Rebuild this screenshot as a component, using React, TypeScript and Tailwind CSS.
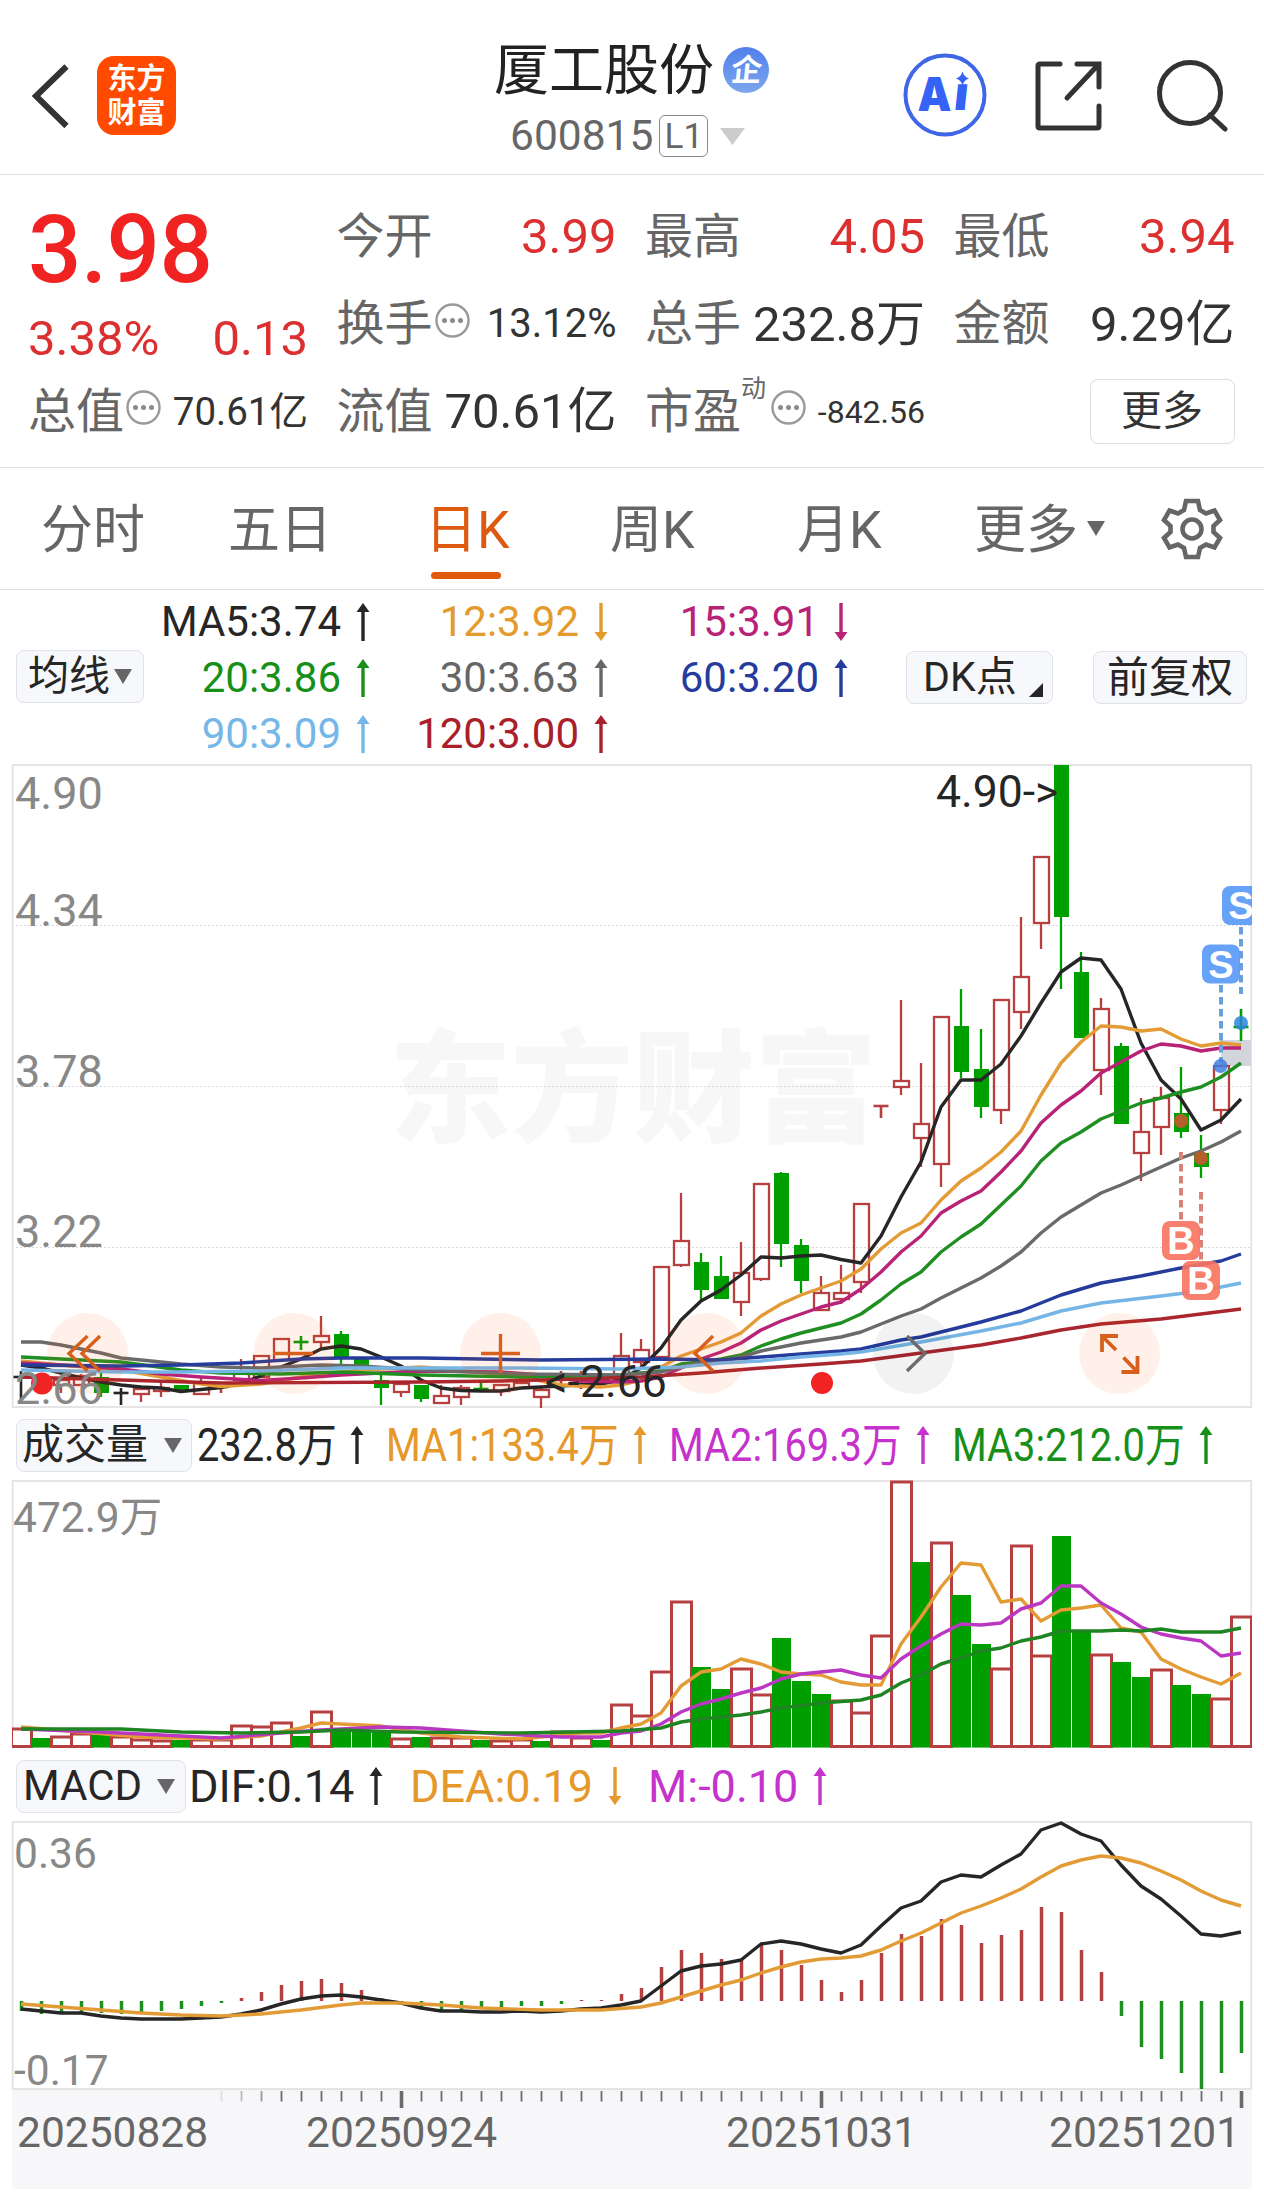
import { ReactNode } from "react";

const RED = "#b5403f";
const GREEN = "#009f00";

// every candle is 20px apart, first one centered on x = 21
const cx = (i: number) => 21 + i * 20;

type Kind = "r" | "g" | "k";
type Candle = [Kind, number, number, number, number];

// kind, high, body top, body bottom, low
const candles: Candle[] = [
  ["k", 1371, 1377, 1377, 1401],
  ["r", 1376, 1380, 1386, 1390],
  ["r", 1378, 1380, 1385, 1393],
  ["r", 1374, 1376, 1385, 1385],
  ["g", 1371, 1377, 1393, 1397],
  ["k", 1388, 1393, 1393, 1405],
  ["r", 1387, 1389, 1394, 1402],
  ["r", 1382, 1388, 1391, 1397],
  ["g", 1385, 1385, 1391, 1391],
  ["r", 1378, 1383, 1394, 1394],
  ["r", 1385, 1387, 1387, 1393],
  ["r", 1359, 1373, 1380, 1380],
  ["r", 1356, 1356, 1377, 1377],
  ["r", 1339, 1339, 1360, 1360],
  ["g", 1336, 1342, 1342, 1350],
  ["r", 1316, 1336, 1342, 1348],
  ["g", 1331, 1334, 1357, 1365],
  ["g", 1358, 1358, 1367, 1368],
  ["g", 1373, 1380, 1388, 1405],
  ["r", 1383, 1384, 1392, 1397],
  ["g", 1385, 1385, 1399, 1402],
  ["r", 1385, 1396, 1403, 1403],
  ["r", 1385, 1388, 1397, 1405],
  ["g", 1383, 1389, 1390, 1391],
  ["r", 1384, 1385, 1391, 1396],
  ["r", 1383, 1383, 1388, 1388],
  ["r", 1388, 1390, 1397, 1408],
  ["r", 1371, 1385, 1385, 1387],
  ["r", 1371, 1386, 1386, 1389],
  ["g", 1373, 1376, 1384, 1385],
  ["r", 1333, 1356, 1380, 1380],
  ["r", 1339, 1350, 1362, 1367],
  ["r", 1267, 1267, 1357, 1357],
  ["r", 1193, 1241, 1265, 1267],
  ["g", 1253, 1262, 1290, 1300],
  ["g", 1256, 1276, 1299, 1299],
  ["r", 1242, 1273, 1302, 1316],
  ["r", 1184, 1184, 1279, 1281],
  ["g", 1172, 1173, 1244, 1267],
  ["g", 1239, 1245, 1281, 1293],
  ["r", 1276, 1293, 1310, 1310],
  ["r", 1265, 1293, 1299, 1304],
  ["r", 1204, 1204, 1282, 1293],
  ["r", 1106, 1106, 1106, 1118],
  ["r", 1000, 1081, 1087, 1095],
  ["r", 1063, 1124, 1138, 1167],
  ["r", 1017, 1017, 1164, 1187],
  ["g", 989, 1026, 1072, 1078],
  ["g", 1029, 1069, 1107, 1118],
  ["r", 1000, 1000, 1110, 1124],
  ["r", 917, 977, 1012, 1029],
  ["r", 857, 857, 923, 949],
  ["g", 765, 765, 917, 989],
  ["g", 952, 972, 1038, 1038],
  ["r", 998, 1009, 1070, 1095],
  ["g", 1043, 1046, 1124, 1124],
  ["r", 1098, 1132, 1153, 1181],
  ["r", 1087, 1098, 1127, 1155],
  ["g", 1067, 1113, 1132, 1138],
  ["g", 1135, 1153, 1167, 1178],
  ["r", 1066, 1066, 1110, 1124],
  ["g", 1009, 1027, 1028, 1041],
];

// [index, y] pairs
type Pts = [number, number][];

// run of values for consecutive candles
const run = (start: number, ys: number[]): Pts => ys.map((y, k) => [start + k, y]);

const ma5 = run(0, [
  1365, 1368, 1373, 1378, 1382, 1385, 1387, 1388, 1391.5, 1389.5, 1387.5, 1383, 1376, 1367, 1359, 1349, 1346, 1349, 1357,
  1366, 1380, 1388, 1390.5, 1391, 1391, 1388, 1387, 1386, 1384.7, 1384, 1380, 1368, 1348, 1320, 1301, 1290, 1275, 1257,
  1258, 1256, 1255, 1259.5, 1263, 1236, 1197, 1162, 1107, 1080, 1080, 1064, 1036, 1003, 972, 958, 960, 989, 1043, 1080,
  1099, 1130, 1120, 1099,
]);
const ma12: Pts = [
  [0, 1361], [2, 1365], [5, 1370], [7, 1377], [9, 1384], [10, 1386.5], [12, 1384], [14, 1377], [17, 1370], [20, 1367], [22, 1370], [25, 1377],
  ...run(27, [
    1385, 1386, 1387, 1385, 1380, 1367, 1356, 1349, 1342, 1333, 1316, 1304, 1295, 1288, 1281, 1269, 1249, 1233, 1223,
    1200, 1181, 1168, 1152, 1131, 1095, 1063, 1042, 1026, 1027, 1031, 1029, 1039, 1046, 1043, 1045,
  ]),
];
const ma15: Pts = [
  [0, 1363], [3, 1366], [5, 1369], [7, 1374], [9, 1377], [12, 1380.5], [14, 1378], [16, 1375], [20, 1371], [24, 1372], [26, 1375], [28, 1381], [30, 1382],
  ...run(31, [
    1381, 1377, 1368, 1359, 1352, 1343, 1330, 1321, 1314, 1307, 1302, 1289, 1272, 1252, 1236, 1213, 1201, 1191, 1172,
    1151, 1123, 1105, 1091, 1073, 1062, 1051, 1044, 1046, 1051, 1048, 1048,
  ]),
];
const ma20: Pts = [
  [0, 1357], [2, 1359], [5, 1362], [8, 1370], [10, 1373], [13, 1374], [16, 1372], [20, 1375], [25, 1377], [28, 1376], [30, 1375],
  ...run(32, [
    1371, 1364, 1362, 1359, 1355, 1346, 1339, 1333, 1328, 1323, 1314, 1300, 1284, 1272, 1252, 1237, 1224, 1205, 1186,
    1161, 1143, 1132, 1119, 1111, 1103, 1098, 1092, 1087, 1077, 1063,
  ]),
];
const ma30: Pts = [
  [0, 1342], [1, 1342], [2, 1345], [3, 1349], [4, 1353], [5, 1358], [6, 1360], [8, 1364], [10, 1367], [12, 1368], [15, 1365], [17, 1366], [20, 1370], [25, 1374], [30, 1375],
  ...run(32, [
    1372, 1367, 1363, 1361, 1357, 1351, 1347, 1343, 1340, 1337, 1332, 1324, 1316, 1309, 1298, 1288, 1278, 1266, 1252,
    1233, 1217, 1205, 1193, 1185, 1176, 1167, 1158, 1151, 1142, 1131,
  ]),
];
const ma60: Pts = [
  [0, 1365], [5, 1366], [8, 1365], [11, 1363], [14, 1359], [16, 1358], [20, 1358], [26, 1360], [32, 1359], [35, 1360], [37, 1357], [39, 1354], [41, 1351], [42, 1349],
  [44, 1340], [45, 1337], [46, 1332], [48, 1322], [50, 1311], [52, 1295], [54, 1283], [56, 1276], [58, 1268], [60, 1261], [61, 1254],
];
const ma90: Pts = [
  [0, 1370], [5, 1372], [8, 1372], [12, 1371], [16, 1368], [25, 1368], [30, 1369], [33, 1367], [35, 1363], [37, 1361], [39, 1357], [41, 1354], [42, 1352],
  [45, 1342], [48, 1331], [50, 1323], [52, 1311], [54, 1303], [57, 1296], [59, 1291], [61, 1283],
];
const ma120: Pts = [
  [0, 1377], [5, 1380], [10, 1383], [20, 1382], [24, 1381], [28, 1379], [31, 1377], [34, 1373], [37, 1368], [40, 1364], [42, 1361],
  [45, 1353], [48, 1345], [50, 1338], [52, 1330], [54, 1324], [57, 1319], [59, 1314], [61, 1309],
];

const volumes: [Kind, number][] = [
  ["r", 1729], ["g", 1738], ["r", 1737], ["r", 1734], ["g", 1735], ["r", 1737], ["r", 1740], ["r", 1741], ["g", 1740], ["r", 1740],
  ["r", 1740], ["r", 1726], ["r", 1727], ["r", 1723], ["g", 1736], ["r", 1712], ["g", 1728], ["g", 1731], ["g", 1731], ["r", 1739],
  ["g", 1737], ["r", 1738], ["r", 1738], ["g", 1740], ["r", 1741], ["r", 1740], ["g", 1741], ["r", 1732], ["r", 1738], ["g", 1740],
  ["r", 1705], ["r", 1716], ["r", 1672], ["r", 1602], ["g", 1667], ["g", 1689], ["r", 1669], ["r", 1695], ["g", 1638], ["g", 1681],
  ["g", 1694], ["r", 1701], ["r", 1713], ["r", 1636], ["r", 1482], ["g", 1562], ["r", 1543], ["g", 1595], ["g", 1644], ["r", 1669],
  ["r", 1546], ["r", 1656], ["g", 1536], ["g", 1631], ["r", 1655], ["g", 1662], ["g", 1677], ["r", 1670], ["g", 1685], ["g", 1694],
  ["r", 1699], ["r", 1617],
];
const vma1: Pts = [
  [0, 1727], [3, 1732], [6, 1737], [10, 1739], [12, 1736], [14, 1728], [15, 1723], [16, 1724], [18, 1726], [20, 1733], [22, 1737], [25, 1739], [28, 1733], [29, 1733],
  ...run(30, [
    1728, 1724, 1713, 1686, 1672, 1669, 1659, 1664, 1672, 1674, 1675, 1682, 1685, 1685, 1644, 1617, 1587, 1563, 1565,
    1602, 1599, 1621, 1610, 1608, 1605, 1628, 1632, 1659, 1669, 1677, 1684, 1673,
  ]),
];
const vma2: Pts = [
  [0, 1729], [4, 1732], [8, 1736], [10, 1738], [13, 1733], [15, 1730], [18, 1727], [20, 1728], [22, 1731], [24, 1734], [27, 1737], [29, 1737],
  ...run(30, [
    1733, 1731, 1724, 1712, 1704, 1699, 1693, 1688, 1679, 1674, 1672, 1670, 1675, 1678, 1659, 1646, 1634, 1624, 1625,
    1623, 1609, 1603, 1586, 1586, 1603, 1614, 1627, 1634, 1638, 1641, 1656, 1653,
  ]),
];
const vma3: Pts = [
  [0, 1729], [5, 1729], [8, 1732], [11, 1733], [14, 1732], [16, 1730], [19, 1732], [25, 1733], [30, 1731], [32, 1728], [33, 1722], [34, 1719], [36, 1715], [37, 1712], [38, 1708], [40, 1703],
  ...run(42, [
    1700, 1695, 1683, 1675, 1664, 1658, 1651, 1648, 1641, 1637, 1631, 1631, 1631, 1630, 1631, 1629, 1632, 1632, 1632, 1628,
  ]),
];

const macd = [
  2011, 2014, 2013, 2012, 2013, 2014, 2012, 2011, 2009, 2006, 2003, 1998, 1992, 1985, 1981, 1979, 1983, 1990, 1998, 2002,
  2009, 2011, 2010, 2009, 2008, 2006, 2006, 2004, 2000, 2000, 1994, 1988, 1967, 1950, 1953, 1959, 1960, 1944, 1950, 1965,
  1980, 1992, 1980, 1953, 1934, 1936, 1919, 1925, 1943, 1935, 1930, 1907, 1912, 1950, 1972, 2016, 2047, 2059, 2073, 2089,
  2073, 2053,
];
const dif = run(0, [
  2009, 2011, 2013, 2013, 2016, 2018, 2019, 2019, 2019, 2018, 2017, 2014, 2010, 2004, 1999, 1996, 1995, 1997, 2000, 2003,
  2008, 2011, 2011, 2012, 2012, 2011, 2012, 2011, 2009, 2008, 2005, 2001, 1986, 1971, 1966, 1964, 1960, 1944, 1941, 1944,
  1949, 1953, 1945, 1926, 1908, 1901, 1882, 1875, 1877, 1865, 1854, 1830, 1823, 1834, 1841, 1865, 1886, 1899, 1916, 1934,
  1936, 1932,
]);
const dea: Pts = [
  [0, 2004], [2, 2007], [4, 2010], [6, 2013], [8, 2015], [10, 2016], [12, 2014], [14, 2010], [16, 2005], [17, 2003], [19, 2003], [21, 2005], [23, 2008], [26, 2010], [29, 2010],
  ...run(31, [
    2007, 2003, 1997, 1991, 1985, 1980, 1973, 1967, 1962, 1959, 1958, 1956, 1950, 1941, 1933, 1923, 1913, 1906, 1898,
    1889, 1877, 1866, 1860, 1856, 1858, 1863, 1871, 1880, 1891, 1900, 1906,
  ]),
];

function Line({ pts, color }: { pts: Pts; color: string }) {
  return (
    <polyline
      points={pts.map(([i, y]) => `${cx(i)},${y}`).join(" ")}
      fill="none"
      stroke={color}
      strokeWidth={3.4}
      strokeLinejoin="round"
    />
  );
}

function CandleBar({ i, c }: { i: number; c: Candle }) {
  const [kind, high, top, bottom, low] = c;
  const x = cx(i);
  const color = kind === "r" ? RED : kind === "g" ? GREEN : "#262626";
  if (bottom - top < 2) {
    return (
      <g stroke={color} strokeWidth={2.6}>
        <line x1={x} x2={x} y1={high} y2={low} />
        <line x1={x - 7.5} x2={x + 7.5} y1={top} y2={top} />
      </g>
    );
  }
  return (
    <g stroke={color} strokeWidth={2.3}>
      <line x1={x} x2={x} y1={high} y2={top} />
      <line x1={x} x2={x} y1={bottom} y2={low} />
      {kind === "r" ? (
        <rect x={x - 7} y={top} width={15} height={bottom - top} fill="none" />
      ) : (
        <rect x={x - 7} y={top} width={15} height={bottom - top} fill={color} stroke="none" />
      )}
    </g>
  );
}

function Tag({ x, y, letter, color }: { x: number; y: number; letter: string; color: string }) {
  return (
    <g>
      <rect x={x} y={y} width={38} height={39} rx={8} fill={color} fillOpacity={0.92} />
      <text
        x={x + 19}
        y={y + 33}
        textAnchor="middle"
        fill="#fff"
        className="font-['Liberation_Sans'] text-[38px] font-bold"
      >
        {letter}
      </text>
    </g>
  );
}

function PriceChart() {
  return (
    <svg className="block overflow-visible" width="1264" height="646" viewBox="0 764 1264 646">
      <defs>
        <clipPath id="price">
          <rect x="12" y="764" width="1240" height="646" />
        </clipPath>
      </defs>
      <text x="389" y="1132" fill="#f7f7f7" textLength="488" className="text-[122px] font-black">
        东方财富
      </text>
      {[925.5, 1086.5, 1247.5].map((y) => (
        <line key={y} x1="12" x2="1251" y1={y} y2={y} stroke="#d8d8d8" strokeWidth="1" strokeDasharray="2 2" />
      ))}
      <rect x="12.7" y="765" width="1238.5" height="642" fill="none" stroke="#e3e3e3" strokeWidth="1.8" />
      <rect x="1221" y="1040" width="30" height="26" fill="#d3d5dc" />
      {candles.map((c, i) => (
        <CandleBar key={i} i={i} c={c} />
      ))}
      <Line pts={ma5} color="#262626" />
      <Line pts={ma12} color="#e39b35" />
      <Line pts={ma15} color="#b82277" />
      <Line pts={ma20} color="#1f8f22" />
      <Line pts={ma30} color="#6a6a6a" />
      <Line pts={ma60} color="#253c9c" />
      <Line pts={ma90} color="#76b6e6" />
      <Line pts={ma120} color="#a9262e" />

      {/* quick action buttons */}
      {[87.5, 294, 500.5, 706.5, 1119.5].map((x) => (
        <circle key={x} cx={x} cy="1353.5" r="40.5" fill="#ff5a10" fillOpacity="0.09" />
      ))}
      <circle cx="913.5" cy="1353.5" r="40.5" fill="#000" fillOpacity="0.05" />
      <g fill="none" stroke="#d85f1c" strokeWidth="3.4">
        <path d="M87.5 1336 L69 1353.5 L87.5 1371" />
        <path d="M100 1336 L82 1353.5 L100 1371" />
        <path d="M273 1353.5 H313" />
        <path d="M481 1353.5 H520 M500.5 1334 V1373" />
        <path d="M713 1336 L695 1353.5 L713 1371" />
        <path d="M1118 1336 H1102 V1352 M1102.5 1336.5 L1116 1350" strokeWidth="3.8" />
        <path d="M1121.5 1372 H1137.5 V1356 M1137 1371.5 L1123.5 1357.5" strokeWidth="3.8" />
      </g>
      <path d="M907 1336 L925 1353.5 L907 1371" fill="none" stroke="#6b6b6b" strokeWidth="3.4" />
      <circle cx="42" cy="1383.5" r="11" fill="#f22323" />
      <circle cx="822" cy="1383" r="11" fill="#f22323" />

      {/* buy / sell marks */}
      <g clipPath="url(#price)">
        <g strokeWidth="4" strokeDasharray="7.5 4.5">
          <line x1="1241" x2="1241" y1="927" y2="994" stroke="#6a9fdc" />
          <line x1="1221" x2="1221" y1="985" y2="1062" stroke="#6a9fdc" />
          <line x1="1181" x2="1181" y1="1152" y2="1220" stroke="#d98277" />
          <line x1="1201" x2="1201" y1="1192" y2="1260" stroke="#d98277" />
        </g>
        <Tag x={1222} y={886} letter="S" color="#5a9af8" />
        <Tag x={1202} y={944.5} letter="S" color="#5a9af8" />
        <Tag x={1162} y={1221} letter="B" color="#f87463" />
        <Tag x={1182} y={1261} letter="B" color="#f87463" />
        <circle cx="1220.5" cy="1066" r="7" fill="#3d7fe0" fillOpacity="0.85" />
        <circle cx="1241" cy="1023" r="7" fill="#2a86dc" fillOpacity="0.85" />
        <circle cx="1181" cy="1121" r="7" fill="#b5602a" />
        <circle cx="1201" cy="1158" r="7" fill="#b5602a" />
      </g>

      <g fill="#888" className="text-[45px]">
        <text x="15" y="808.5">4.90</text>
        <text x="15" y="926">4.34</text>
        <text x="15" y="1087">3.78</text>
        <text x="15" y="1247">3.22</text>
        <text x="15" y="1404">2.66</text>
      </g>
      <g fill="#262626" className="text-[44.5px]">
        <text x="936" y="807">4.90-&gt;</text>
        <text x="545" y="1397">&lt;-2.66</text>
      </g>
    </svg>
  );
}

function VolumeChart() {
  return (
    <svg className="block" width="1264" height="270" viewBox="0 1480 1264 270">
      <clipPath id="vol">
        <rect x="12" y="1480" width="1240" height="268" />
      </clipPath>
      <rect x="12.7" y="1481" width="1238.5" height="266" fill="none" stroke="#e3e3e3" strokeWidth="1.8" />
      <g clipPath="url(#vol)">
        {volumes.map(([kind, top], i) =>
          kind === "g" ? (
            <rect key={i} x={cx(i) - 9} y={top} width={19} height={1747.5 - top} fill={GREEN} />
          ) : (
            <rect
              key={i}
              x={cx(i) - 9.5}
              y={top}
              width={20}
              height={1746.5 - top}
              fill="#fff"
              stroke={RED}
              strokeWidth={3}
            />
          ),
        )}
      </g>
      <Line pts={vma1} color="#e39b35" />
      <Line pts={vma2} color="#bb37c2" />
      <Line pts={vma3} color="#1f8522" />
      <text x="13" y="1531.5" fill="#888" className="text-[42.5px]">
        472.9万
      </text>
    </svg>
  );
}

const tickColor = (i: number) => (i < 11 ? "#ddd" : i < 12 ? "#bbb" : i < 13 ? "#999" : "#6b6b6b");

function MacdChart() {
  const ticks = Array.from({ length: 52 }, (_, k) => k + 10);
  return (
    <svg className="block" width="1264" height="374" viewBox="0 1820 1264 374">
      <rect x="12" y="2089" width="1240" height="100" fill="#f7f7fa" />
      <rect x="12.7" y="1822" width="1238.5" height="267" fill="#fff" stroke="#e3e3e3" strokeWidth="1.8" />
      {macd.map((y, i) => (
        <line key={i} x1={cx(i) + 0.5} x2={cx(i) + 0.5} y1={2001} y2={y} stroke={y > 2001 ? "#1f8f22" : RED} strokeWidth={3.5} />
      ))}
      <Line pts={dif} color="#262626" />
      <Line pts={dea} color="#e39b35" />
      {ticks.map((i) => {
        const major = i === 19 || i === 40 || i === 61;
        return (
          <line
            key={i}
            x1={cx(i) + 0.5}
            x2={cx(i) + 0.5}
            y1={2091}
            y2={major ? 2108 : 2101.5}
            stroke={tickColor(i)}
            strokeWidth={major ? 3.6 : 1.8}
          />
        );
      })}
      <g fill="#888" className="text-[42.5px]">
        <text x="14" y="1868">0.36</text>
        <text x="14" y="2085">-0.17</text>
      </g>
      <g fill="#666" className="text-[42.5px]">
        <text x="17" y="2147">20250828</text>
        <text x="306" y="2147">20250924</text>
        <text x="726" y="2147">20251031</text>
        <text x="1049" y="2147">20251201</text>
      </g>
    </svg>
  );
}

function Dots() {
  return (
    <svg className="ml-0.5 shrink-0 -translate-y-1" width="35" height="35" viewBox="0 0 35 35">
      <circle cx="17.5" cy="17.5" r="16" fill="none" stroke="#999" strokeWidth="2.4" />
      <g fill="#8a8a8a">
        <circle cx="9.5" cy="17.5" r="2.5" />
        <circle cx="17.5" cy="17.5" r="2.5" />
        <circle cx="25.5" cy="17.5" r="2.5" />
      </g>
    </svg>
  );
}

function Cell({ label, extra, children }: { label: string; extra?: ReactNode; children: ReactNode }) {
  return (
    <div className="flex items-center justify-between whitespace-nowrap">
      <div className="flex items-center text-[48px] text-[#666]">
        {label}
        {extra}
      </div>
      {children}
    </div>
  );
}

function Arrow({ down }: { down?: boolean }) {
  return (
    <svg className={down ? "rotate-180" : ""} width="14" height="38" viewBox="0 0 14 38">
      <path d="M7 0 L13.5 9 H0.5 Z" fill="currentColor" />
      <path d="M7 8 V38" stroke="currentColor" strokeWidth="3.4" />
    </svg>
  );
}

function Caret({ className }: { className: string }) {
  return (
    <svg className={className} width="18" height="15" viewBox="0 0 18 15">
      <path d="M0 0 H18 L9 15 Z" fill="currentColor" />
    </svg>
  );
}

function MaItem({ text, color, down }: { text: string; color: string; down?: boolean }) {
  return (
    <div className={"flex h-14 items-center justify-end gap-[15px] " + color}>
      {text}
      <Arrow down={down} />
    </div>
  );
}

function Indicator({ text, color, down }: { text: string; color: string; down?: boolean }) {
  return (
    <div className={"flex items-center " + color}>
      {text}
      <span className="ml-[15px]">
        <Arrow down={down} />
      </span>
    </div>
  );
}

function VolIndicator({ text, color, width }: { text: string; color: string; width: string }) {
  return (
    <div className={"flex items-center justify-between " + color + " " + width}>
      <span className="w-0 origin-left scale-x-[0.865] whitespace-nowrap">{text}</span>
      <Arrow />
    </div>
  );
}

const chip = "flex h-[53px] items-center rounded-lg border-[1.5px] border-[#e1e2e7] bg-[#f7f8fb] text-[#262626]";

function App() {
  return (
    <main className="h-[2194px] w-[1264px] overflow-hidden bg-white font-[Roboto,'Noto_Sans_CJK_SC',sans-serif] leading-none text-[#333]">
      <header className="flex h-[175px] items-start border-b border-[#dcdfdf] pl-[31px]">
        <div className="flex w-[463px] pt-[56px]">
          <svg width="38" height="80" viewBox="0 0 38 80" fill="none" stroke="#333" strokeWidth="6">
            <path d="M35.5 10.5 L5 40 L35.5 70" />
          </svg>
          <div className="ml-[28px] flex h-[79px] w-[79px] flex-col items-center justify-center rounded-[17px] bg-[#ff4a00] text-[29px] leading-[34px] font-bold text-white">
            <span>东方</span>
            <span>财富</span>
          </div>
        </div>
        <div className="w-[277px] pt-[36px]">
          <div className="flex h-[68px] items-center gap-[9px] text-[55px] whitespace-nowrap text-[#222]">
            厦工股份
            <span className="flex h-[46px] w-[46px] shrink-0 items-center justify-center rounded-full bg-linear-to-b from-[#4f80ea] to-[#7ea6ee] text-[31px] font-bold text-white">
              <span className="-skew-x-6">企</span>
            </span>
          </div>
          <div className="flex h-[64px] items-center pl-4 text-[42.5px] text-[#666]">
            600815
            <span className="ml-[6px] flex h-[42px] w-[49px] items-center justify-center rounded-md border-[1.5px] border-[#888] text-[35px]">
              L1
            </span>
            <svg className="ml-[12px]" width="25" height="17" viewBox="0 0 25 17">
              <path d="M0 0 H25 L12.5 17 Z" fill="#ccc" />
            </svg>
          </div>
        </div>
        <div className="ml-[132px] flex items-center pt-[53px]">
          <svg width="84" height="84" viewBox="0 0 84 84">
            <circle cx="42" cy="42" r="39.5" fill="none" stroke="#3f66e6" strokeWidth="4" />
            <path d="M59.5 18.5 Q61 24 66 25.5 Q61 27 59.5 32.5 Q58 27 53 25.500 Q58 24 59.500 18.500 Z" fill="#3563f5" />
            <g fill="#3563f5" className="font-[Inter] text-[47px] font-black">
              <text x="14.5" y="57.5" textLength="34" lengthAdjust="spacingAndGlyphs">
                A
              </text>
              <text x="50" y="57.5" className="origin-[50px_57px] -skew-x-6">
                ı
              </text>
            </g>
          </svg>
          <svg className="ml-[45px]" width="74" height="76" viewBox="0 0 74 76" fill="none" stroke="#333" strokeWidth="5" strokeLinecap="round">
            <path d="M28 7 H8 Q6 7 6 9 V69 Q6 71 8 71 H65 Q67 71 67 69 V49" />
            <path d="M45 7 H67 V30 M66 8 L35 41" />
          </svg>
          <svg className="ml-[46px]" width="76" height="76" viewBox="0 0 76 76" fill="none" stroke="#333" strokeWidth="5">
            <circle cx="38" cy="36" r="30.5" />
            <path d="M58 58 L73 72" strokeLinecap="round" />
          </svg>
        </div>
      </header>

      <section className="grid h-[293px] grid-cols-[280px_280px_280px_281px] grid-rows-[87.5px_87.5px_87.5px] gap-x-[28.5px] border-b border-[#dcdfdf] pt-[18px] pl-[28px] text-[49px]">
        <div className="row-span-2 pt-[8px] text-[#dc3030]">
          <div className="h-[99px] text-[94px] leading-[98px] font-medium tracking-[-0.5px] text-[#f02222]">3.98</div>
          <div className="flex h-[76px] items-center justify-between">
            <span>3.38%</span>
            <span>0.13</span>
          </div>
        </div>
        <Cell label="今开">
          <span className="text-[#dc3030]">3.99</span>
        </Cell>
        <Cell label="最高">
          <span className="text-[#dc3030]">4.05</span>
        </Cell>
        <Cell label="最低">
          <span className="text-[#dc3030]">3.94</span>
        </Cell>
        <Cell label="换手" extra={<Dots />}>
          <span className="text-[40px]">13.12%</span>
        </Cell>
        <Cell label="总手">
          <span>232.8万</span>
        </Cell>
        <Cell label="金额">
          <span>9.29亿</span>
        </Cell>
        <Cell label="总值" extra={<Dots />}>
          <span className="text-[38.5px]">70.61亿</span>
        </Cell>
        <Cell label="流值">
          <span>70.61亿</span>
        </Cell>
        <Cell
          label="市盈"
          extra={
            <>
              <span className="w-[28px] -translate-y-[23px] text-[25px]">动</span>
              <Dots />
            </>
          }
        >
          <span className="text-[32px]">-842.56</span>
        </Cell>
        <div className="flex items-center justify-end">
          <button className="h-[65px] w-[145px] rounded-lg border-[1.5px] border-[#ddd] text-[41px]">更多</button>
        </div>
      </section>

      <nav className="flex h-[122px] items-center border-b border-[#dcdfdf] pt-1 pl-[41px] text-[52px] text-[#666]">
        <span className="w-[187px]">分时</span>
        <span className="w-[197px]">五日</span>
        <span className="relative w-[185px] text-[#dd5a10]">
          日K
          <i className="absolute top-[67px] left-[6px] h-[7px] w-[70px] rounded-full bg-[#e05a0c]" />
        </span>
        <span className="w-[187px]">周K</span>
        <span className="w-[177px]">月K</span>
        <span className="flex w-[187px] items-center">
          更多
          <Caret className="-mt-1 ml-[9px]" />
        </span>
        <svg className="-mt-1" width="62" height="62" viewBox="0 0 62 62" fill="none" stroke="#666" strokeWidth="4.6">
          <path d="M25 3 H37 L39 12 L45 15.5 L53.5 12.5 L59 22 L52.5 28 V34 L59 40 L53.5 49.5 L45 46.5 L39 50 L37 59 H25 L23 50 L17 46.5 L8.5 49.5 L3 40 L9.5 34 V28 L3 22 L8.5 12.5 L17 15.5 L23 12 Z" />
          <circle cx="31" cy="31" r="9.5" />
        </svg>
      </nav>

      <section className="flex h-[174px] items-start pt-1 pl-4 text-[42px]">
        <div className={chip + " mt-[56px] w-[128px] pl-[11px] text-[41px]"}>
          均线
          <Caret className="ml-1 text-[#666]" />
        </div>
        <div className="grid grid-cols-[226px_238px_240px]">
          <MaItem text="MA5:3.74" color="text-[#262626]" />
          <MaItem text="12:3.92" color="text-[#e39b2c]" down />
          <MaItem text="15:3.91" color="text-[#b82277]" down />
          <MaItem text="20:3.86" color="text-[#178f19]" />
          <MaItem text="30:3.63" color="text-[#666]" />
          <MaItem text="60:3.20" color="text-[#253c9c]" />
          <MaItem text="90:3.09" color="text-[#74b7e8]" />
          <MaItem text="120:3.00" color="text-[#a9202a]" />
        </div>
        <div className={chip + " mt-[57px] ml-[58px] w-[147px] pl-4 text-[41px]"}>
          DK点
          <svg className="mt-[24px] ml-3" width="14" height="14" viewBox="0 0 14 14">
            <path d="M14 0 V14 H0 Z" fill="#262626" />
          </svg>
        </div>
        <div className={chip + " mt-[57px] ml-[40px] w-[154px] justify-center text-[42px]"}>前复权</div>
      </section>

      <PriceChart />

      <section className="flex h-[70px] items-center pl-4 text-[46px]">
        <div className={chip + " w-[176px] pl-[5px] text-[42px]"}>
          成交量
          <Caret className="ml-[16px] text-[#666]" />
        </div>
        <VolIndicator text="232.8万" color="text-[#262626]" width="ml-[5px] w-[167px]" />
        <VolIndicator text="MA1:133.4万" color="text-[#e6982a]" width="ml-[22px] w-[261px]" />
        <VolIndicator text="MA2:169.3万" color="text-[#c532cc]" width="ml-[22px] w-[261px]" />
        <VolIndicator text="MA3:212.0万" color="text-[#178f19]" width="ml-[22px] w-[261px]" />
      </section>

      <VolumeChart />

      <section className="flex h-[70px] items-center pt-0.5 pl-4 text-[45px]">
        <div className={chip + " w-[170px] pl-[6px] text-[42px]"}>
          MACD
          <Caret className="ml-[15px] text-[#666]" />
        </div>
        <div className="ml-[3px] flex">
          <Indicator text="DIF:0.14" color="w-[221px] text-[#262626]" />
          <Indicator text="DEA:0.19" color="w-[238px] text-[#e6982a]" down />
          <Indicator text="M:-0.10" color="text-[#c532cc]" />
        </div>
      </section>

      <MacdChart />
    </main>
  );
}

export default App;
